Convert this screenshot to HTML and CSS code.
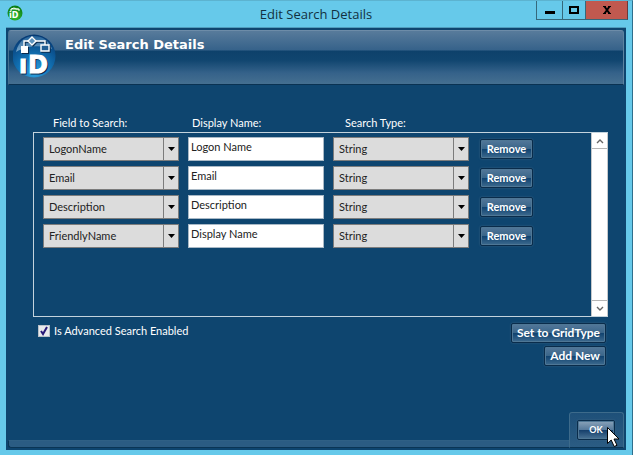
FILE: index.html
```html
<!DOCTYPE html>
<html lang="en">
<head>
    <meta charset="utf-8" />
    <title>Edit Search Details</title>
    <link rel="stylesheet" href="styles.css">
</head>
<body>

    <header class="titlebar">
        <svg class="app-icon" viewBox="0 0 16 16" aria-hidden="true">
            <defs>
                <radialGradient id="green" cx="50%" cy="75%" r="70%">
                    <stop offset="0" stop-color="#35c136" />
                    <stop offset="1" stop-color="#0b7d16" />
                </radialGradient>
            </defs>
            <circle cx="8" cy="8" r="7.5" fill="url(#green)" />
            <path d="M3 5a6 5 0 0 1 10 0" fill="#a5e0a0" opacity=".7" />
            <path d="M4 6V4l3-1 2 1h3v2" stroke="#fff" fill="none" />
            <text x="2" y="13" class="icon-text-small">iD</text>
        </svg>
        <h1 class="window-title">Edit Search Details</h1>
        <div class="window-buttons">
            <button class="win-btn win-min" aria-label="Minimize">
                <svg width="10" height="10" viewBox="0 0 10 10"><rect y="6" width="10" height="3" /></svg>
            </button>
            <button class="win-btn" aria-label="Maximize">
                <svg width="10" height="10" viewBox="0 0 10 10"><path d="M1 2h8v6H1z" fill="none" stroke="#000" stroke-width="2" /></svg>
            </button>
            <button class="win-btn win-close" aria-label="Close">
                <svg width="10" height="10" viewBox="0 0 10 10"><path d="M1 1.500h3M6 1.500h3M1 8.500h3M6 8.500h3" stroke="#000" fill="none" /><path d="M2.500 1.500l5 7M7.500 1.500l-5 7" stroke="#000" stroke-width="2" fill="none" /></svg>
            </button>
        </div>
    </header>

    <main class="content">
        <div class="banner">
            <svg class="logo" viewBox="0 0 44 46" aria-hidden="true">
                <defs>
                    <radialGradient id="ball" cx="50%" cy="88%" r="85%">
                        <stop offset="0" stop-color="#2fa3df" />
                        <stop offset=".45" stop-color="#1272b4" />
                        <stop offset="1" stop-color="#063a74" />
                    </radialGradient>
                    <linearGradient id="gloss" x1="0" y1="0" x2="0" y2="1">
                        <stop offset="0" stop-color="#2b6fa5" />
                        <stop offset="1" stop-color="#a3c4dc" />
                    </linearGradient>
                </defs>
                <circle cx="21" cy="23" r="21.5" fill="url(#ball)" />
                <path d="M3 19C6 7 13 3 21 3s15 4 18 13c-8-4-25-4-36 3z" fill="url(#gloss)" opacity=".75" />
                <g fill="none" stroke="#0b2b4d" stroke-width="1.4" transform="translate(1 1)">
                    <path d="M11 14V8h4M23 8h9v4" />
                    <path d="M19 4l4 4-4 4-4-4z" />
                    <path d="M28 12h8v6h-8z" />
                </g>
                <g fill="none" stroke="#fff" stroke-width="1.4">
                    <path d="M11 14V8h4M23 8h9v4" />
                    <path d="M19 4l4 4-4 4-4-4z" fill="#5d93bd" />
                    <path d="M28 12h8v6h-8z" fill="#225f94" />
                </g>
                <rect x="9" y="14" width="7" height="7" fill="#0b2b4d" />
                <rect x="8" y="13" width="7" height="7" fill="#fff" />
                <text x="7" y="41" class="logo-text logo-shadow">ı</text>
                <text x="16" y="41" class="logo-text logo-shadow">D</text>
                <text x="6" y="40" class="logo-text">ı</text>
                <text x="15" y="40" class="logo-text">D</text>
            </svg>
            <h2 class="banner-title">Edit Search Details</h2>
        </div>

        <form class="search-form">
            <div class="columns column-labels">
                <span id="fieldLabel" class="label-field">Field to Search:</span>
                <span id="nameLabel" class="label-name">Display Name:</span>
                <span id="typeLabel" class="label-type">Search Type:</span>
            </div>

            <div class="list">
                <div class="rows">
                    <div class="columns">
                        <select class="combo" aria-labelledby="fieldLabel"><option>LogonName</option></select>
                        <input class="text" type="text" value="Logon Name" aria-labelledby="nameLabel">
                        <select class="combo" aria-labelledby="typeLabel"><option>String</option></select>
                        <button type="button" class="btn">Remove</button>
                    </div>
                    <div class="columns">
                        <select class="combo" aria-labelledby="fieldLabel"><option>Email</option></select>
                        <input class="text" type="text" value="Email" aria-labelledby="nameLabel">
                        <select class="combo" aria-labelledby="typeLabel"><option>String</option></select>
                        <button type="button" class="btn">Remove</button>
                    </div>
                    <div class="columns">
                        <select class="combo" aria-labelledby="fieldLabel"><option>Description</option></select>
                        <input class="text" type="text" value="Description" aria-labelledby="nameLabel">
                        <select class="combo" aria-labelledby="typeLabel"><option>String</option></select>
                        <button type="button" class="btn">Remove</button>
                    </div>
                    <div class="columns">
                        <select class="combo" aria-labelledby="fieldLabel"><option>FriendlyName</option></select>
                        <input class="text" type="text" value="Display Name" aria-labelledby="nameLabel">
                        <select class="combo" aria-labelledby="typeLabel"><option>String</option></select>
                        <button type="button" class="btn">Remove</button>
                    </div>
                </div>
                <div class="scrollbar">
                    <button type="button" class="scroll-btn" aria-label="Scroll up">
                        <svg width="8" height="6" viewBox="0 0 8 6"><path d="M1 5l3-3 3 3" /></svg>
                    </button>
                    <button type="button" class="scroll-btn" aria-label="Scroll down">
                        <svg width="8" height="6" viewBox="0 0 8 6"><path d="M1 1l3 3 3-3" /></svg>
                    </button>
                </div>
            </div>

            <div class="below-list">
                <label class="check"><input type="checkbox" checked> Is Advanced Search Enabled</label>
                <div class="actions">
                    <button type="button" class="btn">Set to GridType</button>
                    <button type="button" class="btn">Add New</button>
                </div>
            </div>
        </form>

        <footer class="footer">
            <div class="footer-bar"></div>
            <div class="footer-tab">
                <button type="button" class="btn btn-ok">OK</button>
                <svg class="pointer" width="13" height="21" viewBox="0 0 13 21" aria-hidden="true">
                    <path d="M.5.5v16l3.700-3.500 3 6.500 2.800-1.200-3-6.300h5z" fill="#fff" stroke="#000" />
                </svg>
            </div>
        </footer>
    </main>

</body>
</html>
```

FILE: styles.css
```css
* {
    box-sizing: border-box;
}

body {
    margin: 0;
    min-height: 100vh;
    padding: 0 6px 5px;
    display: flex;
    flex-direction: column;
    background: #66c9ea;
    border-top: 1px solid #5cb3d0;
    border-right: 1px solid #2f6f8c;
    font-family: Lato, "Noto Sans", sans-serif;
    font-size: 11px;
    color: #fff;
}

button, input, select {
    font: inherit;
    margin: 0;
}

/* window title bar */
.titlebar {
    height: 27px;
    display: grid;
    grid-template-columns: 1fr auto 1fr;
    border-bottom: 1px solid #4f9dbd;
}

.app-icon {
    width: 16px;
    height: 16px;
    margin: 4px 1px;
}

.icon-text-small {
    font: bold 8px "DejaVu Sans", sans-serif;
    fill: #fff;
}

.window-title {
    margin: 0;
    font-family: "Open Sans", sans-serif;
    font-size: 13px;
    font-weight: normal;
    line-height: 26px;
    color: #12303f;
}

.window-buttons {
    display: flex;
    justify-content: flex-end;
    align-items: flex-start;
    margin-right: -2px;
}

.win-btn {
    width: 23px;
    height: 19px;
    padding: 0;
    display: flex;
    align-items: center;
    justify-content: center;
    background: #66c9ea;
    border: 1px solid #35697c;
    border-top: 0;
    border-right: 0;
}

.win-min {
    width: 26px;
}

.win-close {
    width: 43px;
    background: #c1594f;
    border-right: 1px solid #6b3a3a;
}

/* dialog body */
.content {
    flex: 1;
    display: flex;
    flex-direction: column;
    padding: 2px;
    background: #0e456f;
}

.banner {
    height: 55px;
    display: flex;
    padding-left: 4px;
    gap: 8px;
    border: 1px solid #5d81a0;
    border-color: #6d8ca8 #5f83a0 #0a3252 #47708f;
    border-radius: 3px 3px 0 0;
    background: linear-gradient(#587b9b, #36628a 19px, #0d416b 20px, #10456f 29px, #35628a 42px, #456f90);
}

.logo {
    width: 44px;
    height: 46px;
    margin-top: 2px;
}

.logo-text {
    font: bold 24px "DejaVu Sans", sans-serif;
    fill: #fff;
    stroke: #fff;
    stroke-width: 1;
}

.logo-shadow {
    fill: #0b2b4d;
    stroke: #0b2b4d;
}

.banner-title {
    margin: 0;
    font: bold 13px/28px "DejaVu Sans", sans-serif;
}

.search-form {
    flex: 1;
    display: flex;
    flex-direction: column;
    padding: 30px 16px 0 25px;
}

.columns {
    display: grid;
    grid-template-columns: 1fr 1fr 1fr 55px;
    column-gap: 9px;
}

.column-labels {
    padding: 0 75px 0 10px;
    line-height: 16px;
    margin-bottom: 1px;
}

.label-field {
    padding-left: 10px;
}

.label-name {
    padding-left: 4px;
}

.label-type {
    padding-left: 12px;
}

.list {
    flex: 1;
    display: flex;
    border: 1px solid #c3d3dd;
    border-width: 1px 0 1px 1px;
}

.rows {
    flex: 1;
    display: flex;
    flex-direction: column;
    gap: 5px;
    padding: 4px 58px 4px 9px;
}

.rows .columns {
    align-items: center;
}

.rows .btn {
    width: 53px;
    justify-self: end;
}

.combo {
    appearance: none;
    width: 100%;
    height: 24px;
    padding: 0 18px 1px 5px;
    border: 1px solid #7c7c7c;
    border-radius: 0;
    color: #222;
    background: 
        url("data:image/svg+xml,%3Csvg xmlns='http://www.w3.org/2000/svg' width='7' height='4'%3E%3Cpath d='M0 0h7L3.500 4z'/%3E%3C/svg%3E") no-repeat right 3px center,
        linear-gradient(#7c7c7c, #7c7c7c) no-repeat right 14px top / 1px 100%,
        #dcdcdc;
}

.text {
    width: 100%;
    height: 24px;
    padding: 0 2px 5px;
    border: 1px solid #a9b9c6;
    background: #fff;
    color: #222;
}

.btn {
    height: 20px;
    padding: 0 5px;
    border: 1px solid #0a2c4b;
    border-radius: 2px;
    box-shadow: inset 0 0 0 1px #4f7795, 0 0 2px #3d6787;
    background: linear-gradient(#54789a, #396589 50%, #10426f 51%, #3e6b8f);
    color: #fff;
    font-weight: bold;
    line-height: 18px;
}

.scrollbar {
    width: 17px;
    display: flex;
    flex-direction: column;
    justify-content: space-between;
    background: #fff;
    border: 1px solid #c5c9cc;
    border-width: 0 1px;
}

.scroll-btn {
    height: 16px;
    padding: 0;
    display: flex;
    align-items: center;
    justify-content: center;
    background: #fff;
    border: 0 solid #b5b5b5;
    border-bottom-width: 1px;
}

.scroll-btn:last-child {
    border-width: 1px 0 0;
}

.scroll-btn path {
    fill: none;
    stroke: #666;
    stroke-width: 1.4;
}

.below-list {
    display: flex;
    justify-content: space-between;
    align-items: flex-start;
    padding: 6px 2px 0 5px;
}

.check {
    display: flex;
    align-items: center;
    gap: 4px;
    line-height: 15px;
}

.check input {
    appearance: none;
    width: 12px;
    height: 12px;
    border: 1px solid #b9c0c8;
    background: #e9eaec;
}

.check input:checked {
    background: #e9eaec url("data:image/svg+xml,%3Csvg xmlns='http://www.w3.org/2000/svg' width='10' height='10'%3E%3Cpath d='M2 5l2 3 4-7' fill='none' stroke='%23281a78' stroke-width='2'/%3E%3C/svg%3E") no-repeat center;
}

.actions {
    display: flex;
    flex-direction: column;
    align-items: flex-end;
    gap: 3px;
}

.actions .btn {
    font-size: 12px;
}

/* thin bar along the bottom with the raised OK tab */
.footer {
    display: flex;
    align-items: flex-end;
    margin-top: 46px;
}

.footer-bar {
    flex: 1;
    height: 8px;
    border: 1px solid #0a3555;
    border-top-color: #2f6085;
    border-right: 0;
    border-radius: 0 0 0 3px;
    background: #2b5c83;
}

.footer-tab {
    position: relative;
    width: 55px;
    height: 36px;
    padding: 7px;
    border: 1px solid #3d6b8b;
    border-bottom-color: #0a3555;
    border-radius: 3px 3px 0 0;
    background: linear-gradient(#1e5079, #2b5c83);
}

.btn-ok {
    width: 38px;
    font-size: 9px;
    background: linear-gradient(#8aa3ba, #55789a 50%, #163f6b 51%, #4a7395);
}

.pointer {
    position: absolute;
    left: 37px;
    top: 14px;
}
```
